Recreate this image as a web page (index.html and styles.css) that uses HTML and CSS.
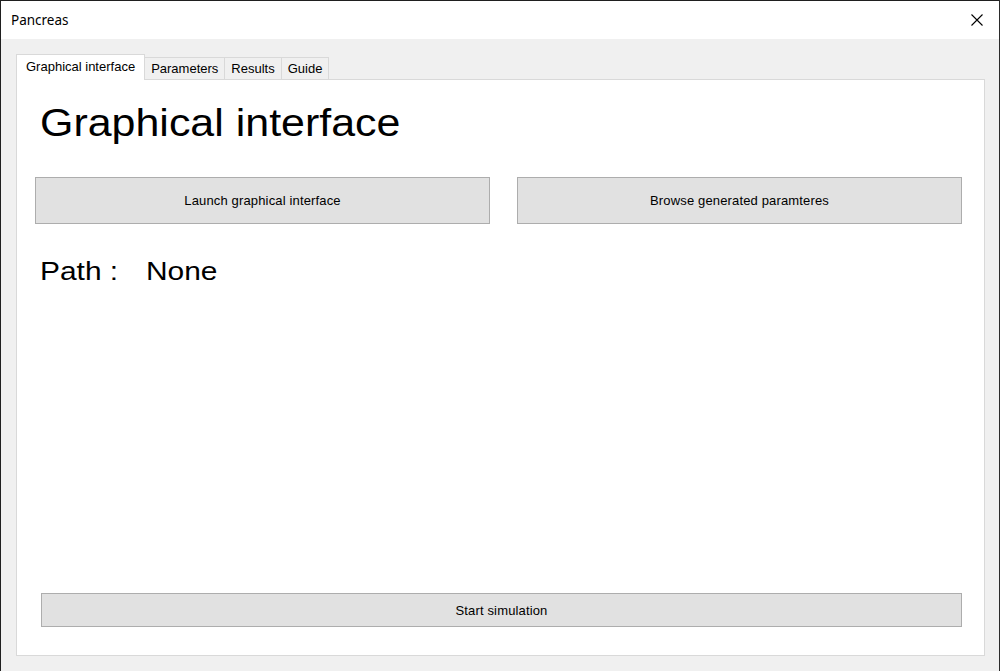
FILE: index.html
```html
<!DOCTYPE html>
<html>
<head>
<meta charset="utf-8">
<link rel="stylesheet" href="styles.css">
</head>
<body>
<div class="window">
  <div class="titlebar">
    <span class="title">Pancreas</span>
    <svg class="close" width="12" height="12" viewBox="0 0 12 12"><path d="M0.5 0.5 L11.5 11.5 M11.5 0.5 L0.5 11.5" stroke="#000" stroke-width="1.1" fill="none"/></svg>
  </div>
  <div class="client">
    <div class="tabs">
      <div class="tab active">Graphical interface</div>
      <div class="tab">Parameters</div>
      <div class="tab">Results</div>
      <div class="tab">Guide</div>
    </div>
    <div class="panel">
      <div class="headrow"><h1 class="heading">Graphical interface</h1></div>
      <div class="btnrow">
        <button class="btn launch">Launch graphical interface</button>
        <button class="btn browse">Browse generated paramteres</button>
      </div>
      <div class="path"><span class="plabel">Path :</span><span class="pval">None</span></div>
      <div class="spacer"></div>
      <button class="btn start">Start simulation</button>
    </div>
  </div>
</div>
</body>
</html>
```

FILE: styles.css
```css
html, body { margin: 0; padding: 0; }
body { width: 1000px; height: 671px; overflow: hidden; background: #2b2b2b; font-family: "Liberation Sans", Arial, sans-serif; }
.window { box-sizing: border-box; width: 999px; height: 671px; border-left: 1px solid #1f1f1f; border-top: 1px solid #1f1f1f; background: #f0f0f0; display: flex; flex-direction: column; }
.titlebar { height: 38px; background: #fff; display: flex; align-items: center; justify-content: space-between; padding: 0 16px 0 10px; box-sizing: border-box; }
.title { font-family: "Noto Sans", "Open Sans", sans-serif; font-size: 13.5px; color: #000; }
.close { display: block; }
.client { flex: 1; padding: 14px 14px 15px 15px; display: flex; flex-direction: column; }
.tabs { display: flex; align-items: flex-end; height: 26px; position: relative; z-index: 1; }
.tab { font-size: 13px; color: #000; background: #f0f0f0; border: 1px solid #d9d9d9; border-bottom: none; height: 22px; line-height: 22px; padding: 0 6px; margin-left: -1px; box-sizing: border-box; }
.tab:first-child { margin-left: 0; }
.tab.active { background: #fff; height: 26px; line-height: 24px; padding: 0 9px; z-index: 2; margin-bottom: -1px; }
.panel { flex: 1; background: #fff; border: 1px solid #d9d9d9; display: flex; flex-direction: column; padding: 0 22px 28px 18px; box-sizing: border-box; }
.headrow { margin: 22px 0 0 5px; }
.heading { display: inline-block; margin: 0; font-weight: normal; font-size: 38px; line-height: 42px; color: #000; transform: scaleX(1.13); transform-origin: left center; }
.btnrow { display: flex; justify-content: space-between; margin-top: 33px; }
.btn { font-family: "Liberation Sans", Arial, sans-serif; font-size: 13px; letter-spacing: 0.15px; color: #000; background: #e1e1e1; border: 1px solid #adadad; padding: 0; margin: 0; }
.launch { width: 455px; height: 47px; }
.browse { width: 445px; height: 47px; }
.path { margin: 32px 0 0 5px; font-size: 26px; line-height: 30px; color: #000; display: flex; }
.plabel, .pval { display: inline-block; transform: scaleX(1.15); transform-origin: left center; }
.pval { margin-left: 38px; }
.spacer { flex: 1; }
.start { height: 34px; margin-left: 6px; }
```
